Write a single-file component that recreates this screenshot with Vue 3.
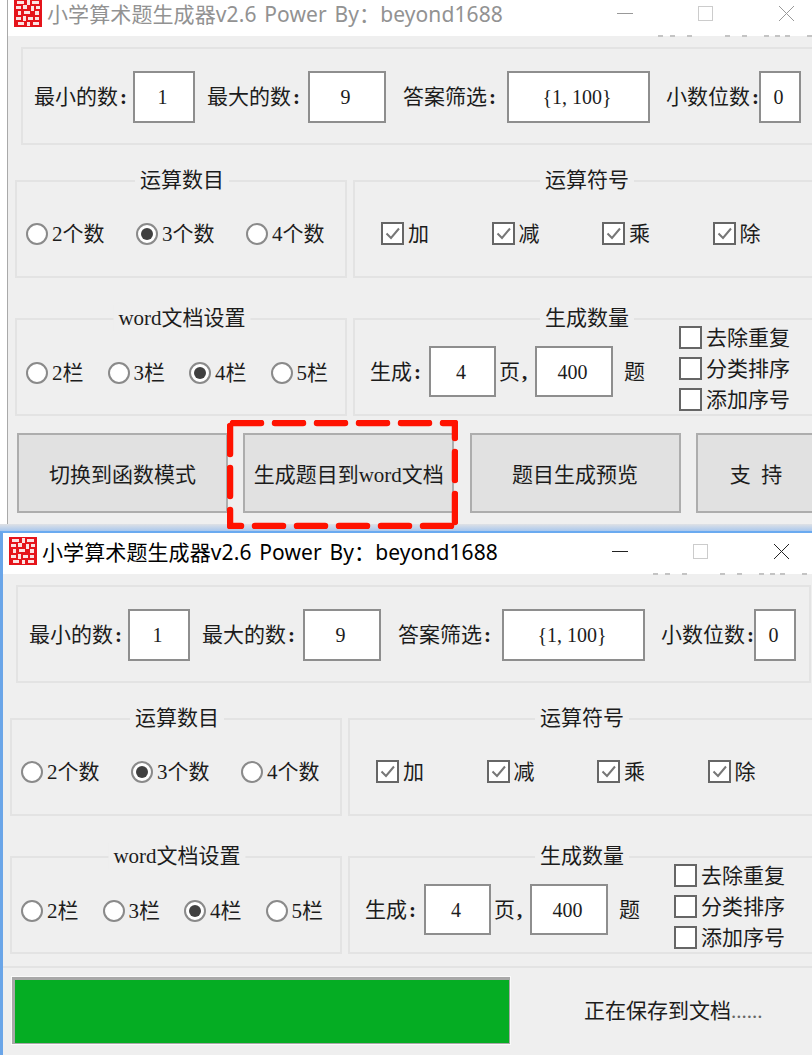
<script setup>
// 两个窗口内容相同，后面的窗口多一条进度栏
const windows = [
  { id: 'back', progress: false },
  { id: 'front', progress: true },
]

const limits = [
  { label: '最小的数', value: '1', lw: 99, w: 62, gap: 12 },
  { label: '最大的数', value: '9', lw: 101, w: 78, gap: 17 },
  { label: '答案筛选', value: '{1, 100}', lw: 104, w: 143, gap: 16 },
  { label: '小数位数', value: '0', lw: 93, w: 42, gap: 0 },
]

const counts = [
  { text: '2个数', on: false },
  { text: '3个数', on: true },
  { text: '4个数', on: false },
]
const signs = ['加', '减', '乘', '除']
const columns = [
  { text: '2栏', on: false },
  { text: '3栏', on: false },
  { text: '4栏', on: true },
  { text: '5栏', on: false },
]
const options = ['去除重复', '分类排序', '添加序号']
const actions = [
  { text: '切换到函数模式', cls: '' },
  { text: '生成题目到word文档', cls: '' },
  { text: '题目生成预览', cls: '' },
  { text: '支\u00a0\u00a0持', cls: 'short' },
]

// 图标：印章的白色斑块
const sealMarks = [
  [3, 2, 7, 3], [13, 1, 3, 5], [18, 2, 7, 3], [2, 7, 5, 3], [9, 6, 4, 4], [17, 7, 3, 5], [22, 7, 4, 3],
  [4, 12, 3, 4], [10, 12, 6, 3], [21, 12, 4, 4], [2, 18, 5, 3], [9, 17, 3, 5], [14, 18, 5, 3],
  [21, 18, 4, 3], [4, 23, 6, 3], [13, 23, 3, 4], [19, 23, 6, 3],
]
const scraps = [650, 662, 679, 717, 734, 756, 767, 777, 799]
</script>

<template>
  <div class="page">
    <template v-for="win in windows" :key="win.id">
      <div v-if="win.id === 'front'" class="shadow-strip"></div>
      <section class="win" :class="'win-' + win.id">
        <header class="title">
          <svg class="seal" viewBox="0 0 28 28">
            <rect width="28" height="28" fill="#e5141b" />
            <g class="seal-marks">
              <rect v-for="(m, i) in sealMarks" :key="i" :x="m[0]" :y="m[1]" :width="m[2]" :height="m[3]" fill="#fbe3e3" />
            </g>
          </svg>
          <span class="title-text">小学算术题生成器v2.6  Power By：beyond1688</span>
          <svg class="ctrl" viewBox="0 0 195 20">
            <path d="M3 10.5H19" :stroke="win.id === 'front' ? '#222' : '#999'" fill="none" />
            <rect x="84.5" y="3.5" width="14" height="14" stroke="#ccc" fill="none" />
            <path d="M165 3L180 18M180 3L165 18" :stroke="win.id === 'front' ? '#222' : '#999'" fill="none" />
          </svg>
          <svg class="scraps" viewBox="0 0 812 3">
            <rect v-for="x in scraps" :key="x" :x="x" y="0" width="5" height="2" fill="#c4c4c4" />
          </svg>
        </header>

        <div class="body">
          <div class="limits">
            <template v-for="f in limits" :key="f.label">
              <span class="limit-label" :style="{ width: f.lw + 'px' }">{{ f.label }}<b class="colon">:</b></span>
              <span class="field" :style="{ width: f.w + 'px', marginRight: f.gap + 'px' }">{{ f.value }}</span>
            </template>
          </div>

          <div class="row row-ops">
            <div class="group group-left">
              <span class="legend">运算数目</span>
              <div class="items gap-count">
                <label v-for="c in counts" :key="c.text" class="item">
                  <i class="radio" :class="{ on: c.on }"></i>{{ c.text }}
                </label>
              </div>
            </div>
            <div class="group group-right">
              <span class="legend">运算符号</span>
              <div class="items gap-sign pad-sign">
                <label v-for="s in signs" :key="s" class="item">
                  <i class="check">
                    <svg viewBox="0 0 19 19"><path d="M3.5 9.5L8 14L16 4.5" fill="none" stroke="#777" stroke-width="2" /></svg>
                  </i>{{ s }}
                </label>
              </div>
            </div>
          </div>

          <div class="row row-doc">
            <div class="group group-left">
              <span class="legend">word文档设置</span>
              <div class="items gap-col">
                <label v-for="c in columns" :key="c.text" class="item">
                  <i class="radio" :class="{ on: c.on }"></i>{{ c.text }}
                </label>
              </div>
            </div>
            <div class="group group-right">
              <span class="legend">生成数量</span>
              <div class="items pad-gen">
                <span class="gen-label">生成<b class="colon">:</b></span>
                <span class="field gen-pages">4</span>
                <span class="gen-unit">页<b class="colon">,</b></span>
                <span class="field gen-total">400</span>
                <span class="gen-tail">题</span>
                <div class="opts">
                  <label v-for="o in options" :key="o" class="item">
                    <i class="check"></i>{{ o }}
                  </label>
                </div>
              </div>
            </div>
          </div>

          <div v-if="!win.progress" class="actions">
            <button v-for="a in actions" :key="a.text" class="btn" :class="a.cls">{{ a.text }}</button>
          </div>

          <div v-else class="status">
            <div class="bar"><div class="bar-fill"></div></div>
            <span class="status-text">正在保存到文档<span class="dots">......</span></span>
          </div>
        </div>
      </section>
    </template>

    <!-- 红色虚线标注框 -->
    <svg class="mark" viewBox="0 0 231 109">
      <g fill="none" stroke="#ff1200" stroke-width="6.5" stroke-linecap="round">
        <path d="M6 3H228" stroke-dasharray="28 14" />
        <path d="M3 6V106" stroke-dasharray="28 14" />
        <path d="M6 106H228" stroke-dasharray="28 14" stroke-dashoffset="20" />
        <path d="M228 6V106" stroke-dasharray="28 14" stroke-dashoffset="16" />
      </g>
    </svg>
  </div>
</template>

<style>
html,
body {
  margin: 0;
  background: #fff;
}
</style>

<style scoped>
.page {
  position: relative;
  width: 812px;
  height: 1055px;
  overflow: hidden;
  background: #fff;
  font: 21px/24px "Liberation Serif", "Noto Sans CJK SC", serif;
  color: #1c1c1c;
}

.win {
  background: #efefef;
}

.win-back {
  height: 529px;
  margin: -5px 0 0 7px;
  border-left: 1px solid #a9a9a9;
  overflow: hidden;
}

.win-front {
  height: 524px;
  border-top: 2px solid #6aaaf0;
  border-left: 3px solid #6aa5e8;
  box-sizing: border-box;
}

.shadow-strip {
  height: 7px;
  background: linear-gradient(#dfe1e5, #a9c8ee);
}

.title {
  position: relative;
  display: flex;
  align-items: flex-start;
  height: 41px;
  padding-left: 6px;
  background: #fff;
  box-sizing: border-box;
}

.seal {
  flex: none;
  width: 28px;
  height: 28px;
  margin-top: 4px;
}

.seal-marks {
  filter: blur(0.6px);
}

.title-text {
  margin: 2px 0 0 5px;
  font: 21px/34px "Noto Sans", "Noto Sans CJK SC", sans-serif;
  letter-spacing: 0.1px;
  word-spacing: 2.2px;
  white-space: pre;
  color: #000;
}

.win-back .title-text {
  color: #929292;
}

.ctrl {
  position: absolute;
  left: 606px;
  top: 8px;
  width: 195px;
  height: 20px;
}

.scraps {
  position: absolute;
  left: 0;
  bottom: -2px;
  width: 812px;
  height: 3px;
}

.limits {
  display: flex;
  align-items: center;
  width: 795px;
  height: 98px;
  margin: 11px 0 0 13px;
  padding: 2px 0 0 11px;
  border: 2px solid #e3e3e3;
  box-sizing: border-box;
}

.limit-label {
  flex: none;
  white-space: nowrap;
}

.colon {
  margin-left: 2px;
  font-weight: 700;
}

.field {
  flex: none;
  display: flex;
  align-items: center;
  justify-content: center;
  height: 52px;
  padding-right: 3px;
  border: 2px solid #8e8e8e;
  box-sizing: border-box;
  background: #fff;
  font-size: 20px;
}

.row {
  display: flex;
  gap: 6px;
  margin-left: 7px;
}

.row-ops {
  margin-top: 35px;
}

.row-doc {
  margin-top: 40px;
}

.group {
  position: relative;
  flex: none;
  display: flex;
  align-items: center;
  height: 98px;
  padding: 9px 0 0 9px;
  border: 2px solid #e3e3e3;
  box-sizing: border-box;
}

.group-left {
  width: 332px;
}

.group-right {
  width: 468px;
  padding-left: 0;
}

.legend {
  position: absolute;
  left: 50%;
  top: -15px;
  padding: 0 5px;
  transform: translateX(-50%);
  background: #efefef;
  white-space: nowrap;
  line-height: 26px;
}

.group-left .legend {
  margin-left: 1px;
}

.items {
  display: flex;
  align-items: center;
}

.gap-count {
  gap: 31.5px;
}

.gap-col {
  gap: 24px;
  margin-top: 2px;
}

.gap-sign {
  gap: 62.5px;
}

.pad-sign {
  padding-left: 26px;
}

.pad-gen {
  padding-left: 15px;
}

.item {
  display: flex;
  align-items: center;
  white-space: nowrap;
}

.radio {
  flex: none;
  display: flex;
  align-items: center;
  justify-content: center;
  width: 22px;
  height: 22px;
  margin-right: 4px;
  border: 2px solid #8a8a8a;
  border-radius: 50%;
  box-sizing: border-box;
  background: #fff;
}

.radio.on::after {
  content: "";
  width: 12px;
  height: 12px;
  border-radius: 50%;
  background: #404040;
}

.check {
  flex: none;
  display: block;
  width: 23px;
  height: 23px;
  margin-right: 4px;
  border: 2px solid #666;
  box-sizing: border-box;
  background: #fff;
}

.check svg {
  display: block;
  width: 19px;
  height: 19px;
}

.gen-label {
  width: 59px;
  flex: none;
}

.gen-pages {
  width: 67px;
  height: 51px;
}

.gen-unit {
  width: 39px;
  flex: none;
  padding-left: 3px;
  box-sizing: border-box;
}

.gen-total {
  width: 78px;
  height: 51px;
}

.gen-tail {
  flex: none;
  margin: 0 34px 0 11px;
}

.opts {
  display: flex;
  flex-direction: column;
  gap: 7px;
  margin-top: -6px;
}

.actions {
  display: flex;
  gap: 15.3px;
  margin: 17px 0 0 9px;
}

.btn {
  flex: none;
  width: 211px;
  height: 80px;
  padding: 3px 0 0;
  border: 2px solid #adadad;
  background: #e1e1e1;
  font: inherit;
  color: inherit;
}

.btn.short {
  width: 120px;
}

.status {
  display: flex;
  align-items: center;
  margin-top: 12px;
  padding: 9px 0 0 9px;
  border-top: 2px solid #e3e3e3;
}

.bar {
  flex: none;
  width: 498px;
  height: 67px;
  padding: 3px 1px 1px 3px;
  box-sizing: border-box;
  background: #a8a8a8;
  outline: 1px solid #fafafa;
}

.bar-fill {
  height: 100%;
  background: #05ad23;
}

.status-text {
  margin-left: 74px;
  white-space: nowrap;
}

.dots {
  color: #666;
}

.mark {
  position: absolute;
  left: 227px;
  top: 420px;
  width: 231px;
  height: 109px;
}
</style>
